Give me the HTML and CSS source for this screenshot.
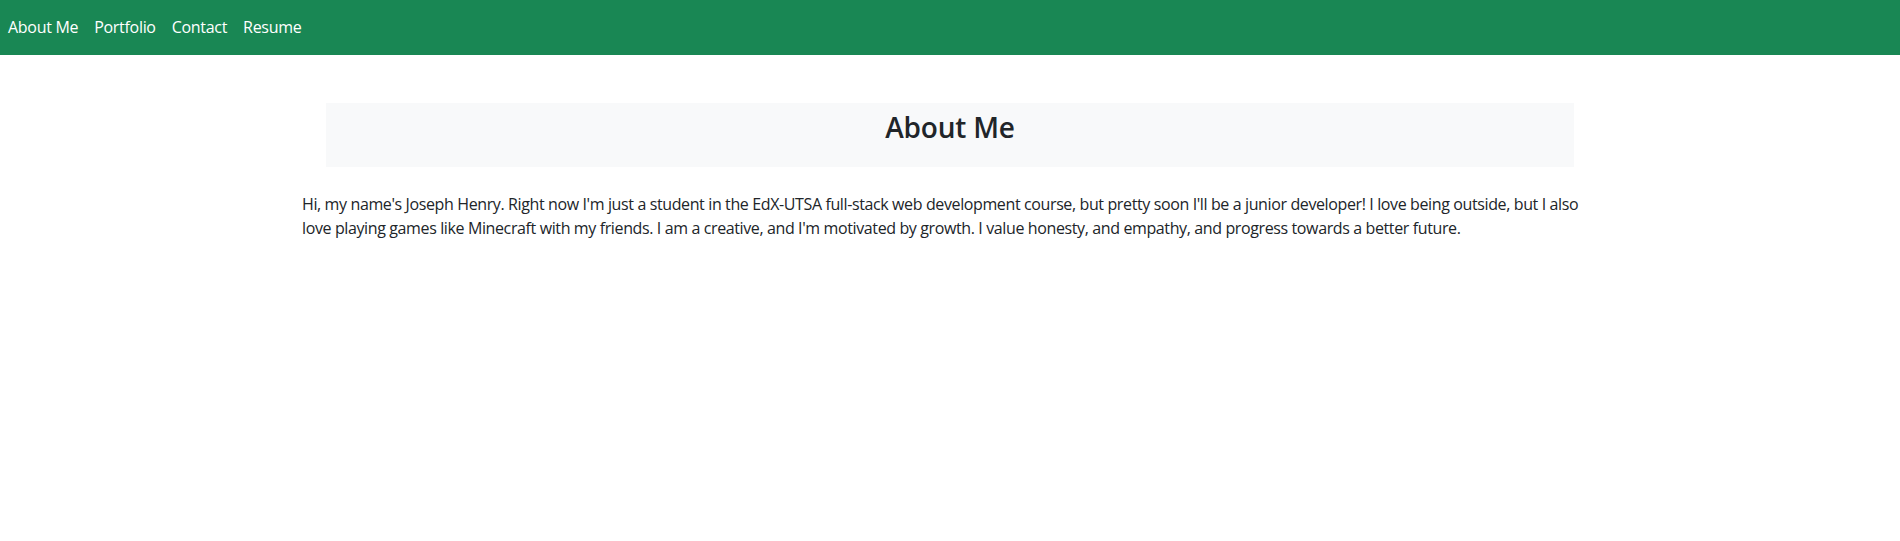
FILE: index.html
```html
<!DOCTYPE html>
<html lang="en">
<head>
<meta charset="utf-8">
<title>Joseph Henry</title>
<link rel="stylesheet" href="styles.css">
</head>
<body>
<nav class="navbar">
  <a class="nav-link" href="#">About Me</a>
  <a class="nav-link" href="#">Portfolio</a>
  <a class="nav-link" href="#">Contact</a>
  <a class="nav-link" href="#">Resume</a>
</nav>
<main class="container">
  <header class="title-box">
    <h2 class="title">About Me</h2>
  </header>
  <p class="bio">Hi, my name's Joseph Henry. Right now I'm just a student in the EdX-UTSA full-stack web development course, but pretty soon I'll be a junior developer! I love being outside, but I also love playing games like Minecraft with my friends. I am a creative, and I'm motivated by growth. I value honesty, and empathy, and progress towards a better future.</p>
</main>
</body>
</html>
```

FILE: styles.css
```css
* { box-sizing: border-box; }
body {
  margin: 0;
  font-family: "Open Sans", "Noto Sans", sans-serif;
  color: #212529;
  background: #fff;
}
.navbar {
  display: flex;
  align-items: center;
  height: 55px;
  background: #198754;
  padding-bottom: 1px;
}
.nav-link {
  color: #fff;
  text-decoration: none;
  font-size: 16px;
  letter-spacing: -0.3px;
  padding: 0 8px;
}
.container {
  width: 1320px;
  margin: 0 auto;
  padding: 0 12px;
}
.title-box {
  margin: 48px 24px 0;
  height: 64px;
  background: #f8f9fa;
  padding-top: 8px;
  text-align: center;
}
.title {
  margin: 0;
  font-size: 28px;
  font-weight: 600;
  line-height: 1.2;
  letter-spacing: -0.2px;
}
.bio {
  margin: 25px 0 0;
  font-size: 16px;
  line-height: 24px;
  letter-spacing: -0.38px;
}
```
